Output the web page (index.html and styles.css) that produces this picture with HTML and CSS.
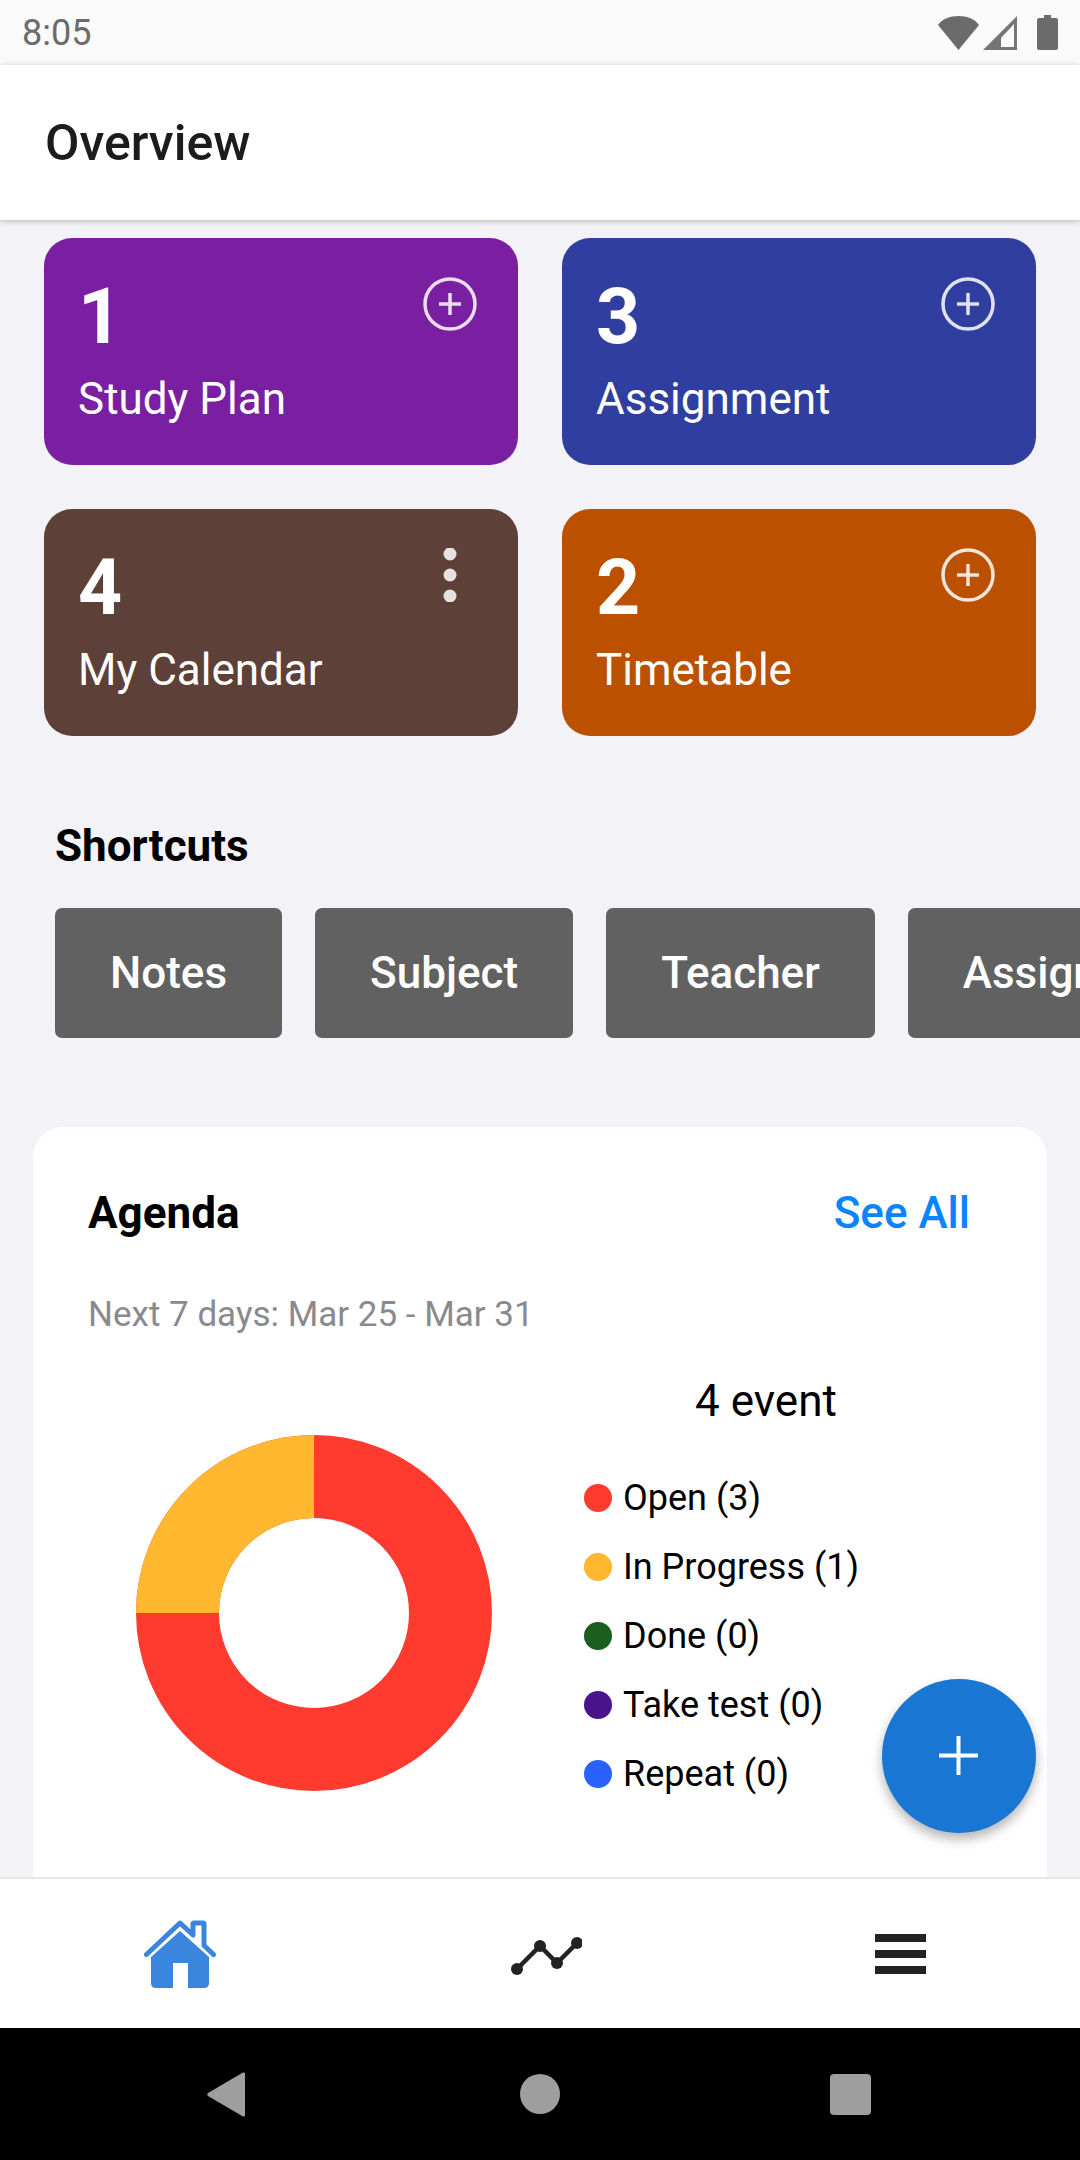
FILE: index.html
```html
<!DOCTYPE html>
<html>
<head>
    <title>Overview</title>
    <link rel="stylesheet" href="styles.css">
</head>
<body>
    <div class="app">
        <!-- Status bar -->
        <div class="status-bar">
            <span class="time">8:05</span>
            <div class="status-icons">
                <svg width="41" height="34" viewBox="0 0 41 34"><path d="M20.5 34 L0 9 C4 3 12 0 20.5 0 C29 0 37 3 41 9 Z" fill="#6b6b6b"/></svg>
                <svg width="34" height="34" viewBox="0 0 34 34"><path fill-rule="evenodd" d="M34 0 V34 H0 Z M31 8 L18 22 V31 H31 Z" fill="#757575"/></svg>
                <svg width="21" height="35" viewBox="0 0 21 35"><path d="M7 0 H14 V3 H19 Q21 3 21 5 V33 Q21 35 19 35 H2 Q0 35 0 33 V5 Q0 3 2 3 H7 Z" fill="#6b6b6b"/></svg>
            </div>
        </div>

        <div class="header">
            <h1>Overview</h1>
        </div>

        <div class="content">
            <div class="tiles">
                <div class="tile purple">
                    <div class="tile-top">
                        <span class="tile-count">1</span>
                        <svg class="tile-icon" width="54" height="54" viewBox="0 0 54 54"><circle cx="27" cy="27" r="25" fill="none" stroke="#fff" stroke-width="3.5"/><path d="M16 27 H38 M27 16 V38" stroke="#fff" stroke-width="3.5"/></svg>
                    </div>
                    <div class="tile-label">Study Plan</div>
                </div>
                <div class="tile indigo">
                    <div class="tile-top">
                        <span class="tile-count">3</span>
                        <svg class="tile-icon" width="54" height="54" viewBox="0 0 54 54"><circle cx="27" cy="27" r="25" fill="none" stroke="#fff" stroke-width="3.5"/><path d="M16 27 H38 M27 16 V38" stroke="#fff" stroke-width="3.5"/></svg>
                    </div>
                    <div class="tile-label">Assignment</div>
                </div>
                <div class="tile brown">
                    <div class="tile-top">
                        <span class="tile-count">4</span>
                        <svg class="tile-icon" width="54" height="54" viewBox="0 0 54 54"><circle cx="27" cy="6" r="6.5" fill="#fff"/><circle cx="27" cy="27" r="6.5" fill="#fff"/><circle cx="27" cy="48" r="6.5" fill="#fff"/></svg>
                    </div>
                    <div class="tile-label">My Calendar</div>
                </div>
                <div class="tile orange">
                    <div class="tile-top">
                        <span class="tile-count">2</span>
                        <svg class="tile-icon" width="54" height="54" viewBox="0 0 54 54"><circle cx="27" cy="27" r="25" fill="none" stroke="#fff" stroke-width="3.5"/><path d="M16 27 H38 M27 16 V38" stroke="#fff" stroke-width="3.5"/></svg>
                    </div>
                    <div class="tile-label">Timetable</div>
                </div>
            </div>

            <h2 class="shortcuts-title">Shortcuts</h2>
            <div class="shortcuts">
                <div class="shortcut">Notes</div>
                <div class="shortcut">Subject</div>
                <div class="shortcut">Teacher</div>
                <div class="shortcut">Assignment</div>
            </div>

            <!-- Agenda card -->
            <div class="agenda">
                <div class="agenda-head">
                    <span class="agenda-title">Agenda</span>
                    <span class="see-all">See All</span>
                </div>
                <div class="agenda-range">Next 7 days: Mar 25 - Mar 31</div>
                <div class="agenda-body">
                    <svg class="donut" width="356" height="356" viewBox="0 0 356 356">
                        <circle cx="178" cy="178" r="136.5" fill="none" stroke="#ff3b30" stroke-width="83"/>
                        <circle cx="178" cy="178" r="136.5" fill="none" stroke="#ffb830" stroke-width="83" stroke-dasharray="214.4 857.6" transform="rotate(180 178 178)"/>
                    </svg>
                    <div class="legend">
                        <div class="legend-total">4 event</div>
                        <div class="legend-row"><span class="dot dot-open"></span>Open (3)</div>
                        <div class="legend-row"><span class="dot dot-progress"></span>In Progress (1)</div>
                        <div class="legend-row"><span class="dot dot-done"></span>Done (0)</div>
                        <div class="legend-row"><span class="dot dot-test"></span>Take test (0)</div>
                        <div class="legend-row"><span class="dot dot-repeat"></span>Repeat (0)</div>
                    </div>
                </div>
            </div>

            <div class="fab">
                <svg width="40" height="40" viewBox="0 0 40 40"><path d="M0 19.5 H39 M19.5 0 V39" stroke="#fff" stroke-width="4"/></svg>
            </div>
        </div>

        <!-- Bottom tabs -->
        <div class="tabs">
            <div class="tab">
                <svg width="72" height="68" viewBox="0 0 72 68">
                    <path d="M2.5 34.5 L36 3 L49 15 V4 Q49 3 50 3 H59 Q60 3 60 4 V25.5 L69.5 34.5" fill="none" stroke="#3a86de" stroke-width="5" stroke-linecap="round" stroke-linejoin="round"/>
                    <path d="M36 11 L65 37 V63 Q65 68 60 68 H44 V43 H29 V68 H12 Q7 68 7 63 V37 Z" fill="#3a86de"/>
                </svg>
            </div>
            <div class="tab">
                <svg width="72" height="44" viewBox="0 0 72 44">
                    <path d="M7 37 L30 14 L47 31 L67 11" fill="none" stroke="#222" stroke-width="4.5"/>
                    <circle cx="7" cy="37" r="6" fill="#222"/><circle cx="30" cy="14" r="6" fill="#222"/><circle cx="47" cy="31" r="6" fill="#222"/><circle cx="67" cy="11" r="6" fill="#222"/>
                </svg>
            </div>
            <div class="tab">
                <div class="burger"><span></span><span></span><span></span></div>
            </div>
        </div>

        <!-- Android nav bar -->
        <div class="nav-bar">
            <svg class="nav-back" width="38" height="45" viewBox="0 0 38 45"><path d="M36 0.5 Q38 0 38 2 V43 Q38 45 36 44.5 L1 24 Q-0.5 22.5 1 21 Z" fill="#9e9e9e"/></svg>
            <div class="nav-home"></div>
            <div class="nav-recent"></div>
        </div>
    </div>
</body>
</html>
```

FILE: styles.css
```css
* {
    box-sizing: border-box;
}
body {
    margin: 0;
    font-family: Roboto, sans-serif;
    background-color: #f2f2f7;
}
.app {
    display: flex;
    flex-direction: column;
    width: 1080px;
    height: 2160px;
    overflow: hidden;
}
.status-bar {
    display: flex;
    justify-content: space-between;
    align-items: center;
    height: 65px;
    padding: 0 22px;
    background-color: #fafafa;
}
.time {
    font-size: 36px;
    color: #6b6b6b;
}
.status-icons {
    display: flex;
    align-items: center;
    gap: 4px;
}
.status-icons svg:last-child {
    margin-left: 16px;
}
.header {
    display: flex;
    align-items: center;
    height: 155px;
    padding: 0 45px;
    background-color: #fff;
    box-shadow: 0 1px 6px rgba(0,0,0,0.25);
    z-index: 1;
}
h1 {
    margin: 0;
    font-size: 50px;
    font-weight: 500;
    color: #1c1c1c;
}
.content {
    position: relative;
    flex: 1;
    min-height: 0;
    overflow: hidden;
}
.tiles {
    display: grid;
    grid-template-columns: 474px 474px;
    grid-auto-rows: 227px;
    gap: 44px;
    padding: 18px 44px 0;
}
.tile {
    padding: 34px 34px 0;
    border-radius: 28px;
    color: #fff;
}
.purple { background-color: #7b1fa2; }
.indigo { background-color: #303f9f; }
.brown { background-color: #5d4037; }
.orange { background-color: #bb5000; }
.tile-top {
    display: flex;
    justify-content: space-between;
    height: 95px;
}
.tile-count {
    font-size: 77px;
    font-weight: 700;
    line-height: 90px;
}
.tile-icon {
    margin: 5px 7px 0 0;
    opacity: 0.85;
}
.tile-label {
    margin-top: 6px;
    font-size: 44px;
    line-height: 52px;
}
.shortcuts-title {
    margin: 84px 0 0 55px;
    font-size: 44px;
    font-weight: 700;
    line-height: 52px;
    color: #000;
}
.shortcuts {
    display: flex;
    gap: 33px;
    margin-top: 36px;
    padding-left: 55px;
}
.shortcut {
    display: flex;
    align-items: center;
    flex-shrink: 0;
    height: 130px;
    padding: 0 55px;
    border-radius: 7px;
    background-color: #616161;
    color: #fff;
    font-size: 44px;
    font-weight: 500;
}
.agenda {
    height: 800px;
    margin: 89px 33px 0;
    padding: 60px 77px 0 55px;
    border-radius: 30px;
    background-color: #fff;
}
.agenda-head {
    display: flex;
    justify-content: space-between;
    line-height: 52px;
    font-size: 44px;
}
.agenda-title {
    font-weight: 700;
    color: #000;
}
.see-all {
    font-weight: 500;
    color: #0a84ff;
}
.agenda-range {
    margin-top: 54px;
    font-size: 35px;
    line-height: 44px;
    color: #8a8a8e;
}
.agenda-body {
    display: flex;
    margin-top: 38px;
}
.donut {
    flex-shrink: 0;
    margin: 60px 0 0 48px;
}
.legend {
    width: 364px;
    margin-left: 92px;
}
.legend-total {
    font-size: 44px;
    line-height: 52px;
    text-align: center;
    color: #000;
}
.legend-row {
    display: flex;
    align-items: center;
    gap: 11px;
    height: 69px;
    font-size: 36px;
    color: #000;
}
.legend-total + .legend-row {
    margin-top: 36px;
}
.dot {
    width: 28px;
    height: 28px;
    border-radius: 50%;
}
.dot-open { background-color: #ff3b30; }
.dot-progress { background-color: #ffb830; }
.dot-done { background-color: #1b5e20; }
.dot-test { background-color: #4a148c; }
.dot-repeat { background-color: #2962ff; }
.fab {
    position: absolute;
    right: 44px;
    bottom: 44px;
    display: flex;
    justify-content: center;
    align-items: center;
    width: 154px;
    height: 154px;
    border-radius: 50%;
    background-color: #1976d2;
    box-shadow: 0 6px 12px rgba(0,0,0,0.3);
}
.tabs {
    display: flex;
    justify-content: space-between;
    align-items: center;
    height: 151px;
    padding: 0 154px 0 144px;
    border-top: 2px solid #e6e6e6;
    background-color: #fff;
}
.tab {
    display: flex;
    align-items: center;
}
.burger {
    display: flex;
    flex-direction: column;
    gap: 8px;
    width: 51px;
}
.burger span {
    height: 8px;
    background-color: #222;
}
.nav-bar {
    position: relative;
    height: 132px;
    background-color: #000;
}
.nav-back, .nav-home, .nav-recent {
    position: absolute;
}
.nav-back {
    left: 207px;
    top: 44px;
}
.nav-home {
    left: 520px;
    top: 46px;
    width: 40px;
    height: 40px;
    border-radius: 50%;
    background-color: #9e9e9e;
}
.nav-recent {
    left: 830px;
    top: 46px;
    width: 41px;
    height: 41px;
    border-radius: 4px;
    background-color: #9e9e9e;
}
```
